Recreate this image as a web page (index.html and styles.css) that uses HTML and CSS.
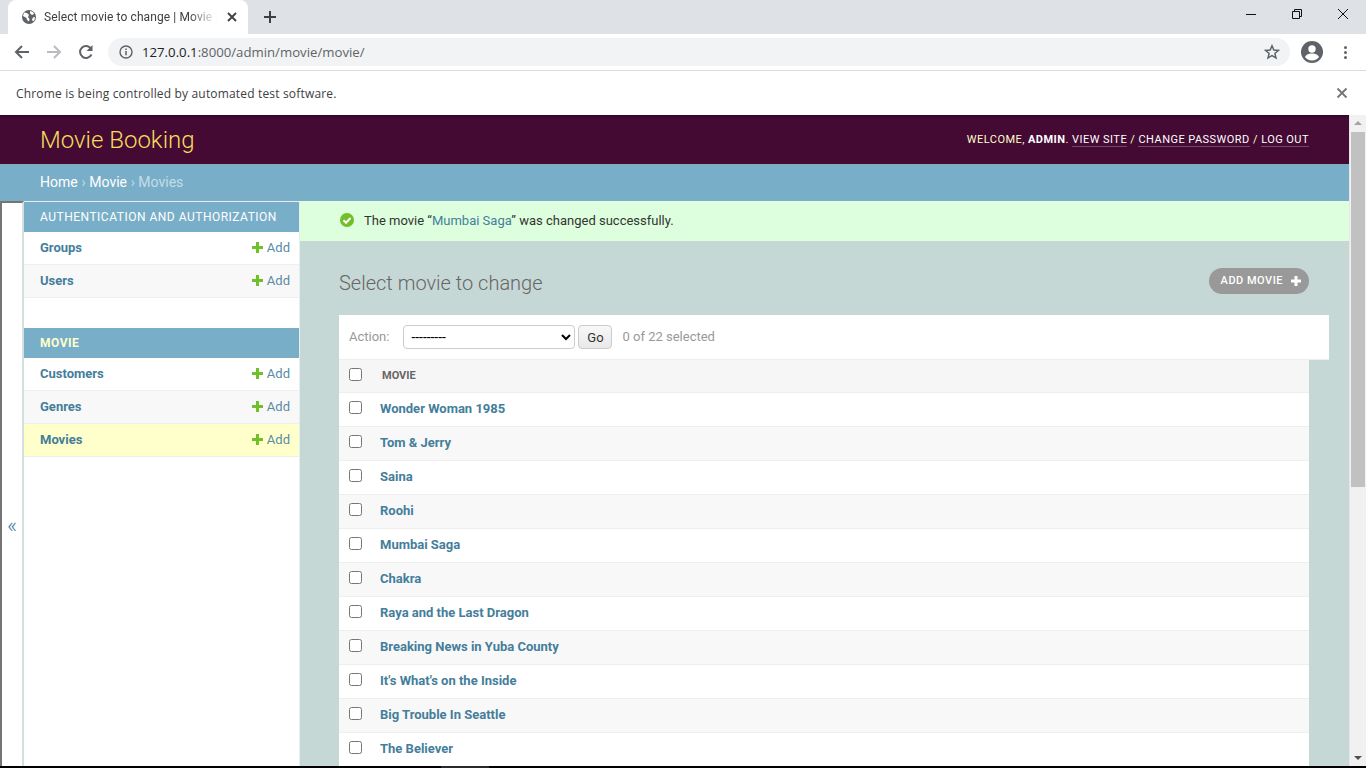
FILE: index.html
```html
<!DOCTYPE html>
<html lang="en">
<head>
    <meta charset="UTF-8">
    <title>Select movie to change | Movie Booking</title>
    <link rel="stylesheet" href="styles.css">
</head>
<body>
    <div class="tabstrip">
        <div class="tab">
            <svg class="globe" width="16" height="16" viewBox="0 0 16 16"><circle cx="8" cy="8" r="7" fill="#5f6368"/><path d="M3 3.500l3 .5 2 2-1 2 1.500 2-.5 2.500-2-1.500-.5-2L2 7zM9 2l3 1 1 2-2 1-2-1.500zM12 8.500l2-.5-.5 3-1.500 1.500-1-2z" fill="#fff"/></svg>
            <span class="tab-title">Select movie to change | Movie Booking</span>
            <svg class="tab-close" width="10" height="10" viewBox="0 0 10 10"><path d="M1 1l8 8M9 1l-8 8" stroke="#3c4043" stroke-width="1.800"/></svg>
        </div>
        <svg class="new-tab" width="14" height="14" viewBox="0 0 14 14"><path d="M7 1v12M1 7h12" stroke="#3c4043" stroke-width="2"/></svg>
        <div class="window-btns">
            <svg width="12" height="12" viewBox="0 0 12 12"><path d="M1 6.500h10" stroke="#111" stroke-width="1"/></svg>
            <svg width="12" height="12" viewBox="0 0 12 12"><path d="M1.500 3.500h7v7h-7zM3.500 3.500v-2h7v7h-2" fill="none" stroke="#111"/></svg>
            <svg width="12" height="12" viewBox="0 0 12 12"><path d="M1 1l10 10M11 1L1 11" stroke="#111"/></svg>
        </div>
    </div>

    <div class="toolbar">
        <svg class="nav-icon" width="16" height="16" viewBox="0 0 16 16"><path d="M15 8H2M8 2L2 8l6 6" fill="none" stroke="#5f6368" stroke-width="2"/></svg>
        <svg class="nav-icon" width="16" height="16" viewBox="0 0 16 16"><path d="M1 8h13M8 2l6 6-6 6" fill="none" stroke="#b9bcc0" stroke-width="2"/></svg>
        <svg class="nav-icon" width="16" height="16" viewBox="0 0 16 16"><path d="M13.500 10.500A6 6 0 1 1 13 4.500" fill="none" stroke="#5f6368" stroke-width="2"/><path d="M14.500 1v6h-6z" fill="#5f6368"/></svg>
        <div class="omnibox">
            <svg width="14" height="14" viewBox="0 0 14 14"><circle cx="7" cy="7" r="6" fill="none" stroke="#5f6368" stroke-width="1.400"/><path d="M7 6v4.200M7 3.500v1.400" stroke="#5f6368" stroke-width="1.500"/></svg>
            <span class="url"><span class="url-host">127.0.0.1</span>:8000/admin/movie/movie/</span>
            <svg class="star" width="16" height="16" viewBox="0 0 16 16"><path d="M8 1.800l1.800 4.200 4.600.4-3.500 3 1.100 4.500L8 11.500l-4 2.400 1.100-4.500-3.500-3 4.600-.4z" fill="none" stroke="#5f6368" stroke-width="1.500"/></svg>
        </div>
        <svg class="avatar" width="22" height="22" viewBox="0 0 22 22"><circle cx="11" cy="11" r="11" fill="#5f6368"/><circle cx="11" cy="8" r="3.700" fill="#fff"/><path d="M4 16c1.500-3 4.500-3.500 7-3.500s5.500.5 7 3.500c-1.500 2-4 3.500-7 3.500s-5.500-1.500-7-3.500z" fill="#fff"/></svg>
        <div class="kebab"><i></i><i></i><i></i></div>
    </div>

    <div class="infobar">
        <span>Chrome is being controlled by automated test software.</span>
        <svg width="12" height="12" viewBox="0 0 12 12"><path d="M1.500 1.500l9 9M10.500 1.500l-9 9" stroke="#757575" stroke-width="1.800"/></svg>
    </div>

    <div class="viewport">
        <div class="page">
            <div id="header">
                <div class="branding">Movie Booking</div>
                <div class="user-tools">
                    WELCOME, <strong>ADMIN</strong>. <a href="#">VIEW SITE</a> / <a href="#">CHANGE PASSWORD</a> / <a href="#">LOG OUT</a>
                </div>
            </div>
            <div class="breadcrumbs"><a href="#">Home</a> › <a href="#">Movie</a> › Movies</div>

            <div class="main">
                <div class="nav-toggle">«</div>
                <div class="sidebar">
                    <div class="app-caption">AUTHENTICATION AND AUTHORIZATION</div>
                    <div class="model-row"><a href="#">Groups</a><span class="add-link">Add</span></div>
                    <div class="model-row alt"><a href="#">Users</a><span class="add-link">Add</span></div>
                    <div class="app-caption current-app">MOVIE</div>
                    <div class="model-row"><a href="#">Customers</a><span class="add-link">Add</span></div>
                    <div class="model-row alt"><a href="#">Genres</a><span class="add-link">Add</span></div>
                    <div class="model-row current"><a href="#">Movies</a><span class="add-link">Add</span></div>
                </div>

                <div class="content">
                    <div class="messagelist">
                        <svg width="14" height="14" viewBox="0 0 14 14"><circle cx="7" cy="7" r="7" fill="#70bf2b"/><path d="M3.500 7.200l2.500 2.500 4.500-4.700" fill="none" stroke="#fff" stroke-width="2"/></svg>
                        <span>The movie “<a href="#">Mumbai Saga</a>” was changed successfully.</span>
                    </div>
                    <div class="content-inner">
                        <div class="title-row">
                            <h1>Select movie to change</h1>
                            <a class="addlink" href="#">ADD MOVIE
                                <svg width="10" height="10" viewBox="0 0 10 10"><path d="M5 0v10M0 5h10" stroke="#fff" stroke-width="3"/></svg>
                            </a>
                        </div>
                        <div class="actions">
                            <label>Action:</label>
                            <select><option>---------</option></select>
                            <button>Go</button>
                            <span class="counter">0 of 22 selected</span>
                        </div>
                        <table class="result-list">
                            <thead>
                                <tr><th class="check"><input type="checkbox"></th><th class="col-head">MOVIE</th></tr>
                            </thead>
                            <tbody>
                                <tr><td class="check"><input type="checkbox"></td><td><a href="#">Wonder Woman 1985</a></td></tr>
                                <tr><td class="check"><input type="checkbox"></td><td><a href="#">Tom &amp; Jerry</a></td></tr>
                                <tr><td class="check"><input type="checkbox"></td><td><a href="#">Saina</a></td></tr>
                                <tr><td class="check"><input type="checkbox"></td><td><a href="#">Roohi</a></td></tr>
                                <tr><td class="check"><input type="checkbox"></td><td><a href="#">Mumbai Saga</a></td></tr>
                                <tr><td class="check"><input type="checkbox"></td><td><a href="#">Chakra</a></td></tr>
                                <tr><td class="check"><input type="checkbox"></td><td><a href="#">Raya and the Last Dragon</a></td></tr>
                                <tr><td class="check"><input type="checkbox"></td><td><a href="#">Breaking News in Yuba County</a></td></tr>
                                <tr><td class="check"><input type="checkbox"></td><td><a href="#">It's What's on the Inside</a></td></tr>
                                <tr><td class="check"><input type="checkbox"></td><td><a href="#">Big Trouble In Seattle</a></td></tr>
                                <tr><td class="check"><input type="checkbox"></td><td><a href="#">The Believer</a></td></tr>
                            </tbody>
                        </table>
                    </div>
                </div>
            </div>
        </div>
        <div class="scrollbar">
            <div class="arrow-up"></div>
            <div class="thumb"></div>
            <div class="arrow-down"></div>
        </div>
    </div>
    <div class="screen-edge"></div>
</body>
</html>
```

FILE: styles.css
```css
* {
    box-sizing: border-box;
}
html, body {
    margin: 0;
    height: 768px;
    overflow: hidden;
}
body {
    display: flex;
    flex-direction: column;
    font-family: Roboto, "Liberation Sans", sans-serif;
    background: white;
}
a {
    text-decoration: none;
}

/* browser chrome */
.tabstrip {
    height: 34px;
    flex: none;
    display: flex;
    align-items: center;
    background: #dee1e6;
    padding-left: 8px;
}
.tab {
    width: 240px;
    height: 34px;
    align-self: flex-end;
    display: flex;
    align-items: center;
    background: white;
    border-radius: 8px 8px 0 0;
    padding: 0 11px 0 13px;
}
.tab-title {
    flex: 1;
    margin-left: 7px;
    font: 12px Roboto, sans-serif;
    letter-spacing: 0.1px;
    color: #3c4043;
    white-space: nowrap;
    overflow: hidden;
    -webkit-mask-image: linear-gradient(to right, black 84%, transparent 100%);
    mask-image: linear-gradient(to right, black 84%, transparent 100%);
}
.tab-close {
    margin-left: 10px;
}
.new-tab {
    margin-left: 15px;
}
.window-btns {
    margin-left: auto;
    display: flex;
    gap: 34px;
    padding-right: 17px;
    margin-top: -7px;
    align-items: center;
}
.window-btns svg {
    width: 12px;
    height: 12px;
}
.toolbar {
    height: 37px;
    flex: none;
    display: flex;
    align-items: center;
    background: white;
    border-bottom: 1px solid #dadce0;
    padding: 0 18px 0 14px;
}
.nav-icon {
    margin-right: 16px;
}
.omnibox {
    width: 1182px;
    height: 28px;
    margin-left: -2px;
    display: flex;
    align-items: center;
    background: #f1f3f4;
    border-radius: 14px;
    padding: 0 10px 0 11px;
}
.url {
    margin-left: 9px;
    font: 13.200px "Open Sans", sans-serif;
    color: #5f6368;
}
.url-host {
    color: #202124;
}
.star {
    margin-left: auto;
}
.avatar {
    margin-left: 11px;
}
.kebab {
    margin-left: 21px;
    display: flex;
    flex-direction: column;
    gap: 2px;
}
.kebab i {
    width: 3px;
    height: 3px;
    border-radius: 50%;
    background: #5f6368;
}
.infobar {
    height: 44px;
    flex: none;
    display: flex;
    align-items: center;
    justify-content: space-between;
    padding: 0 18px 0 16px;
    font: 12px "Open Sans", sans-serif;
    letter-spacing: 0.17px;
    color: #3c4043;
}

/* page */
.viewport {
    flex: 1;
    min-height: 0;
    display: flex;
}
.page {
    flex: 1;
    min-width: 0;
    overflow: hidden;
    display: flex;
    flex-direction: column;
}
#header {
    height: 49px;
    flex: none;
    display: flex;
    align-items: center;
    justify-content: space-between;
    padding: 0 40px;
    background: #440a33;
    box-shadow: inset 0 2px 2px -1px rgba(0, 0, 0, 0.4);
}
.branding {
    font-size: 24px;
    font-weight: 300;
    color: #f5dd5d;
}
.user-tools {
    font-size: 11px;
    letter-spacing: 0.46px;
    color: #ffc;
}
.user-tools strong {
    color: white;
}
.user-tools a {
    color: white;
    border-bottom: 1px solid rgba(255, 255, 255, 0.25);
}
.breadcrumbs {
    height: 37px;
    flex: none;
    display: flex;
    align-items: center;
    gap: 3.700px;
    padding: 0 40px 2px;
    background: #79aec8;
    font-size: 14px;
    color: #c4dce8;
}
.breadcrumbs a {
    color: white;
}
.main {
    flex: 1;
    min-height: 0;
    display: flex;
}
.nav-toggle {
    width: 24px;
    flex: none;
    display: flex;
    align-items: center;
    justify-content: center;
    border-left: 2px solid #757575;
    border-top: 2px solid #757575;
    border-right: 2px solid #d5dfe0;
    font-size: 22px;
    font-weight: 300;
    color: #447e9b;
    padding-top: 82px;
}
.sidebar {
    width: 276px;
    flex: none;
    border-top: 1px solid #e8eeee;
    border-right: 1px solid #e6eeee;
    background: white;
}
.app-caption {
    height: 30px;
    display: flex;
    align-items: center;
    padding: 0 0 0 16px;
    background: #79aec8;
    font-size: 12px;
    letter-spacing: 0.5px;
    color: white;
}
.current-app {
    margin-top: 30px;
    font-weight: 700;
    color: #ffc;
}
.model-row {
    height: 33px;
    display: flex;
    align-items: center;
    justify-content: space-between;
    padding: 0 9px 2px 16px;
    border-bottom: 1px solid #eee;
    font-size: 13px;
}
.model-row a {
    font-weight: 700;
    color: #447e9b;
}
.alt {
    background: #f8f8f8;
}
.current {
    background: #ffc;
}
.add-link {
    display: flex;
    align-items: center;
    gap: 4px;
    color: #5a8ba6;
}
.add-link::before {
    content: "";
    width: 11px;
    height: 11px;
    background:
        linear-gradient(#70bf2b, #70bf2b) center / 100% 3px no-repeat,
        linear-gradient(#70bf2b, #70bf2b) center / 3px 100% no-repeat;
}
.content {
    flex: 1;
    min-width: 0;
    background: #c6d8d6;
}
.messagelist {
    height: 40px;
    display: flex;
    align-items: center;
    gap: 10px;
    padding: 0 0 2px 40px;
    background: #dfd;
    font-size: 13px;
    color: #333;
}
.messagelist a {
    color: #447e9b;
}
.content-inner {
    padding: 27px 40px 0 39px;
}
.title-row {
    height: 47px;
    display: flex;
    justify-content: space-between;
}
h1 {
    margin: 0;
    font-size: 20px;
    font-weight: 300;
    line-height: 30px;
    color: #666;
}
.addlink {
    height: 26px;
    display: flex;
    align-items: center;
    gap: 8px;
    padding: 0 8px 1px 12px;
    border-radius: 13px;
    background: #999;
    font-size: 11px;
    font-weight: 500;
    letter-spacing: 0.5px;
    color: white;
}
.actions {
    width: 990px;
    height: 45px;
    display: flex;
    align-items: center;
    padding-left: 10px;
    background: white;
    border-bottom: 1px solid #eee;
    font-size: 13px;
    color: #999;
}
.actions label, .counter {
    padding-bottom: 2px;
}
.actions select {
    width: 172px;
    height: 24px;
    margin-left: 14px;
    padding-left: 3px;
    background: white;
    border: 1px solid #ccc;
    border-radius: 4px;
    font: 13.800px Roboto, sans-serif;
    color: black;
}
.actions button {
    width: 34px;
    height: 24px;
    margin-left: 3px;
    padding: 0;
    background: linear-gradient(#f8f8f8, #e8e8e8);
    border: 1px solid #ccc;
    border-radius: 4px;
    font: 13px Roboto, sans-serif;
    color: #333;
}
.counter {
    margin-left: 10px;
}
.result-list {
    width: 970px;
    border-collapse: collapse;
    font-size: 13px;
}
.result-list th {
    height: 32px;
    padding: 0;
    background: #f6f6f6;
    border-bottom: 1px solid #eee;
    text-align: left;
}
.result-list td {
    height: 34px;
    padding: 0 0 2px;
    background: white;
    border-bottom: 1px solid #eee;
}
.result-list tbody tr:nth-child(even) td {
    background: #f8f8f8;
}
.result-list .check {
    width: 41px;
    padding-left: 10px;
    padding-bottom: 3px;
}
.check input {
    display: block;
    width: 13px;
    height: 13px;
    margin: 0;
}
.col-head {
    font-size: 11px;
    font-weight: 700;
    color: #666;
    padding-left: 2px !important;
}
.result-list a {
    font-weight: 700;
    color: #447e9b;
}

/* scrollbar */
.scrollbar {
    width: 17px;
    flex: none;
    position: relative;
    background: #f1f1f1;
    border-left: 1px solid #e6e6e6;
}
.thumb {
    position: absolute;
    top: 17px;
    left: 1px;
    width: 14px;
    height: 355px;
    background: #c1c1c1;
}
.arrow-up, .arrow-down {
    position: absolute;
    left: 4px;
    width: 0;
    height: 0;
    border-left: 4px solid transparent;
    border-right: 4px solid transparent;
}
.arrow-up {
    top: 6px;
    border-bottom: 4px solid #a3a3a3;
}
.arrow-down {
    bottom: 6px;
    border-top: 4px solid #505050;
}
.screen-edge {
    height: 2px;
    flex: none;
    background:
        linear-gradient(#2a2a2a, #2a2a2a) 441px 0 / 48px 100% no-repeat,
        black;
}
```
